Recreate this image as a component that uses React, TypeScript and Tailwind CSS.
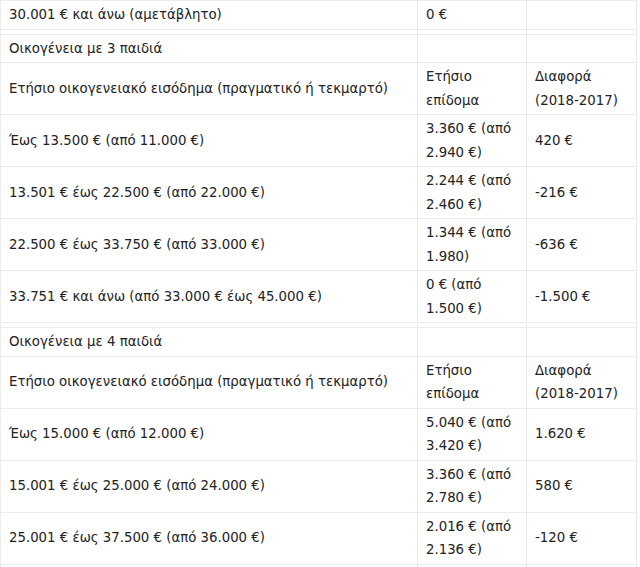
import React from 'react';

type Row = { a: string; b: React.ReactNode; c: string };

const cell = 'border border-[#ebebeb] px-2 py-[2px] align-middle';

const group3: Row[] = [
  { a: 'Έως 13.500 € (από 11.000 €)', b: <>3.360 € (από<br />2.940 €)</>, c: '420 €' },
  { a: '13.501 € έως 22.500 € (από 22.000 €)', b: <>2.244 € (από<br />2.460 €)</>, c: '-216 €' },
  { a: '22.500 € έως 33.750 € (από 33.000 €)', b: <>1.344 € (από<br />1.980)</>, c: '-636 €' },
  { a: '33.751 € και άνω (από 33.000 € έως 45.000 €)', b: <>0 € (από<br />1.500 €)</>, c: '-1.500 €' },
];

const group4: Row[] = [
  { a: 'Έως 15.000 € (από 12.000 €)', b: <>5.040 € (από<br />3.420 €)</>, c: '1.620 €' },
  { a: '15.001 € έως 25.000 € (από 24.000 €)', b: <>3.360 € (από<br />2.780 €)</>, c: '580 €' },
  { a: '25.001 € έως 37.500 € (από 36.000 €)', b: <>2.016 € (από<br />2.136 €)</>, c: '-120 €' },
  { a: '37.501 € και άνω (από 36.000 € έως 48.000 €)', b: <>0 € (από<br />1.500 €)</>, c: '-1.500 €' },
];

function Spacer() {
  return (
    <tr className="h-[5px]">
      <td className="border border-[#ebebeb] p-0" />
      <td className="border border-[#ebebeb] p-0" />
      <td className="border border-[#ebebeb] p-0" />
    </tr>
  );
}

function Group({ title, rows }: { title: string; rows: Row[] }) {
  return (
    <>
      <tr>
        <td className={cell}>{title}</td>
        <td className={cell} />
        <td className={cell} />
      </tr>
      <tr>
        <td className={cell}>Ετήσιο οικογενειακό εισόδημα (πραγματικό ή τεκμαρτό)</td>
        <td className={cell}>Ετήσιο<br />επίδομα</td>
        <td className={cell}>Διαφορά<br />(2018-2017)</td>
      </tr>
      {rows.map((r) => (
        <tr key={r.a}>
          <td className={cell}>{r.a}</td>
          <td className={cell}>{r.b}</td>
          <td className={cell}>{r.c}</td>
        </tr>
      ))}
    </>
  );
}

export default function App() {
  return (
    <div className="h-[567px] w-[640px] overflow-hidden bg-white">
      <table className="w-[636px] table-fixed border-collapse font-['Verdana','DejaVu_Sans',sans-serif] text-[13.3px] leading-[23.5px] text-[#222]">
        <colgroup>
          <col className="w-[417px]" />
          <col className="w-[109px]" />
          <col className="w-[110px]" />
        </colgroup>
        <tbody>
          <tr>
            <td className={cell}>30.001 € και άνω (αμετάβλητο)</td>
            <td className={cell}>0 €</td>
            <td className={cell} />
          </tr>
          <Spacer />
          <Group title="Οικογένεια με 3 παιδιά" rows={group3} />
          <Spacer />
          <Group title="Οικογένεια με 4 παιδιά" rows={group4} />
        </tbody>
      </table>
    </div>
  );
}
